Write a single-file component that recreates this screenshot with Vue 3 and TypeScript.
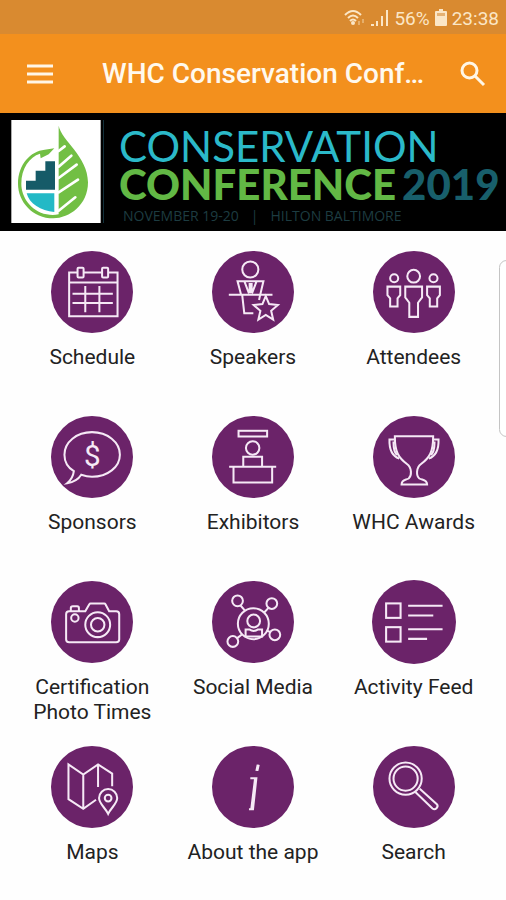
<script setup lang="ts">
type IconName =
  | 'schedule' | 'speakers' | 'attendees'
  | 'sponsors' | 'exhibitors' | 'awards'
  | 'camera' | 'social' | 'feed'
  | 'maps' | 'about' | 'search'

interface Tile {
  icon: IconName
  label: string
}

const tiles: Tile[] = [
  { icon: 'schedule', label: 'Schedule' },
  { icon: 'speakers', label: 'Speakers' },
  { icon: 'attendees', label: 'Attendees' },
  { icon: 'sponsors', label: 'Sponsors' },
  { icon: 'exhibitors', label: 'Exhibitors' },
  { icon: 'awards', label: 'WHC Awards' },
  { icon: 'camera', label: 'Certification Photo Times' },
  { icon: 'social', label: 'Social Media' },
  { icon: 'feed', label: 'Activity Feed' },
  { icon: 'maps', label: 'Maps' },
  { icon: 'about', label: 'About the app' },
  { icon: 'search', label: 'Search' },
]
</script>

<template>
  <div class="app">
    <div class="status">
      <svg class="wifi" viewBox="0 0 22 18" aria-hidden="true">
        <path d="M1 6 Q9 -2 17 6 M4 9 Q9 4 14 9 M6 12 Q9 9 12 12" />
        <circle class="dot" cx="9" cy="14" r="2" />
        <path class="faint" d="M15 12v4M19 10v4" />
      </svg>
      <svg class="signal" viewBox="0 0 18 18" aria-hidden="true">
        <path d="M0 15h3v2H0zM5 12h2v5H5zM10 7h2v10h-2zM15 1h2v16h-2z" />
      </svg>
      <span>56%</span>
      <svg class="battery" viewBox="0 0 12 18" aria-hidden="true">
        <path d="M4 0h4v2h3q1 0 1 1v13q0 1-1 1H1q-1 0-1-1V3q0-1 1-1h3z" />
        <path class="level" d="M2 4h8v3H2z" />
      </svg>
      <span>23:38</span>
    </div>

    <header class="bar">
      <button class="bar-button" type="button" aria-label="Menu">
        <svg class="menu-icon" viewBox="0 0 28 20" aria-hidden="true">
          <path d="M1 2h26M1 10h26M1 18h26" />
        </svg>
      </button>
      <h1 class="title">WHC Conservation Conf…</h1>
      <button class="bar-button" type="button" aria-label="Search">
        <svg class="find-icon" viewBox="0 0 26 26" aria-hidden="true">
          <circle cx="9.500" cy="9.500" r="7.500" />
          <path d="M15 15l9 9" />
        </svg>
      </button>
    </header>

    <section class="banner">
      <svg class="logo" viewBox="34 31 268 309" aria-hidden="true">
        <rect x="34" y="31" width="268" height="309" fill="#fff" />
        <path fill="#72bf44" d="M176 48C184 92 264 140 264 218C264 286 208 326 160 326C98 326 54 276 54 222C54 164 92 124 134 120L163 116L146 134L122 146L120 132C88 142 64 176 64 222C64 262 92 304 140 314Q158 318 176 314Z" />
        <path fill="none" stroke="#fff" stroke-width="8" stroke-linecap="round" d="M176 124L194 110M176 171L214 138M176 205L230 165M176 248L234 210M176 303L226 263" />
        <path fill="#165b68" d="M78 240V213H107V183H136V155H165V240Z" />
        <path fill="#23b9c6" d="M80 251H163V307C122 304 88 282 80 251Z" />
      </svg>
      <div class="wordmark">
        <p class="line-one">CONSERVATION</p>
        <p class="line-two"><span>CONFERENCE</span><span class="year">2019</span></p>
        <p class="venue"><span>NOVEMBER 19-20</span><span>|</span><span>HILTON BALTIMORE</span></p>
      </div>
    </section>

    <main class="grid">
      <a v-for="tile in tiles" :key="tile.icon" class="tile" href="#">
        <span class="disc">
          <svg class="icon" :class="{ large: tile.icon === 'feed' }" viewBox="0 0 244 244" aria-hidden="true">
            <circle class="fill" cx="122" cy="122" r="122" />
            <g v-if="tile.icon === 'schedule'">
              <path d="M79 64H54V194H198V64H171M97 64H151M54 94H198M102 104V182M144 104V182M64 127H184M64 155H184" />
              <rect x="79" y="50" width="18" height="29" rx="3" />
              <rect x="152" y="50" width="18" height="29" rx="3" />
            </g>
            <g v-else-if="tile.icon === 'speakers'">
              <circle cx="114" cy="55" r="24" />
              <path d="M86 128L76 90H153L144 128M97 92L110 126M132 92L119 126M112 95V126M118 95V126M50 130H180M90 132L96 185H123M143 132L140 146" />
              <path d="M160 134L170 158L196 161L176 178L182 204L160 190L138 204L144 178L124 161L150 158Z" />
            </g>
            <g v-else-if="tile.icon === 'attendees'">
              <circle cx="121" cy="75" r="19" />
              <circle cx="63" cy="81" r="12" />
              <circle cx="180" cy="81" r="12" />
              <path d="M96 106h50v32l-12 16v42h-26v-42l-12-16zM43 106h38v25l-8 10v24h-22v-24l-8-10zM161 106h38v25l-8 10v24h-22v-24l-8-10z" />
            </g>
            <g v-else-if="tile.icon === 'sponsors'">
              <path d="M68 164C50 153 40 134 40 115C40 78 76 48 122 48C168 48 205 78 205 115C205 152 168 181 122 181C110 181 101 179 90 175C82 188 68 197 48 200C58 192 66 180 68 164Z" />
              <text x="123" y="149" text-anchor="middle">$</text>
            </g>
            <g v-else-if="tile.icon === 'exhibitors'">
              <rect x="79" y="44" width="85" height="17" />
              <circle cx="121" cy="95" r="20" />
              <path d="M93 150V121H149V150M51 151H191M64 151V198H179V151" />
            </g>
            <g v-else-if="tile.icon === 'awards'">
              <path d="M65 60H179C179 108 168 124 143 143C128 154 128 178 138 186C146 191 161 188 161 204H85C85 188 98 191 106 186C116 178 116 154 101 143C76 124 65 108 65 60Z" />
              <path d="M64 70H49C48 98 54 118 78 127M66 79H61C61 98 65 110 71 116M180 70H195C196 98 190 118 166 127M178 79H183C183 98 179 110 173 116" />
            </g>
            <g v-else-if="tile.icon === 'camera'">
              <path d="M54 90H102L114 69Q115 67 118 67H158Q161 67 162 69L173 90H194Q203 90 203 99V174Q203 182 194 182H54Q45 182 45 174V99Q45 90 54 90ZM59 89V80Q59 75 65 75H78Q83 75 83 80V89" />
              <circle cx="139" cy="130" r="37" />
              <circle cx="139" cy="130" r="20" />
              <circle cx="71" cy="110" r="11" />
            </g>
            <g v-else-if="tile.icon === 'social'">
              <circle cx="123" cy="127" r="46" />
              <circle cx="124" cy="119" r="19" />
              <path d="M100 165V144H111Q124 153 137 144H149V165ZM85 73L98 88M168 80L156 93M75 170L89 159M174 152L164 148" />
              <circle cx="76" cy="59" r="16" />
              <circle cx="178" cy="67" r="16" />
              <circle cx="62" cy="180" r="16" />
              <circle cx="187" cy="160" r="16" />
            </g>
            <g v-else-if="tile.icon === 'feed'">
              <rect x="41" y="68" width="42" height="42" />
              <rect x="41" y="137" width="42" height="42" />
              <path d="M105 75H205M105 103H178M105 143H205M105 171H160" />
            </g>
            <g v-else-if="tile.icon === 'maps'">
              <path d="M134 160L96 187L52 158V55L96 85L140 55L182 82V120M96 85V187M140 55V122" />
              <path d="M170 202C162 184 143 172 143 155A27 27 0 0 1 197 155C197 172 178 184 170 202Z" />
              <circle cx="170" cy="155" r="10" />
            </g>
            <g v-else-if="tile.icon === 'about'">
              <path d="M136 56L132 74M139 56L135 74" />
              <path d="M114 96H132L122 188H110M128 98L117 186" />
            </g>
            <g v-else>
              <circle cx="97" cy="97" r="48" />
              <circle cx="97" cy="97" r="36" />
              <path d="M126 137L177 186Q183 191 189 185Q195 179 190 173L139 127" />
            </g>
          </svg>
        </span>
        <span class="label">{{ tile.label }}</span>
      </a>
    </main>

    <div class="edge-handle" aria-hidden="true"></div>
  </div>
</template>

<style>
body {
  margin: 0;
  background: #fefefe;
}
</style>

<style scoped>
.app {
  position: relative;
  min-height: 100vh;
  overflow: hidden;
  font-family: Roboto, "Liberation Sans", sans-serif;
  color: #222;
}

.status {
  display: flex;
  align-items: center;
  justify-content: flex-end;
  gap: 5px;
  height: 34px;
  padding: 2px 7px 0 0;
  box-sizing: border-box;
  background: #d98a30;
  color: #fbe6c6;
  font-size: 19px;
}

.status svg {
  height: 18px;
  fill: #fbe6c6;
}

.status .wifi {
  width: 22px;
  fill: none;
  stroke: #fbe6c6;
  stroke-width: 2;
}

.status .wifi .dot {
  fill: #fbe6c6;
  stroke: none;
}

.status .wifi .faint {
  opacity: 0.4;
}

.status .signal {
  width: 18px;
}

.status .battery {
  width: 12px;
}

.status .battery .level {
  fill: #e5b173;
}

.bar {
  display: flex;
  align-items: center;
  height: 79px;
  padding: 0 14px 0 20px;
  background: #f3901d;
}

.bar-button {
  display: flex;
  flex: none;
  padding: 6px;
  border: 0;
  background: none;
}

.bar-button svg {
  fill: none;
  stroke: #fff6e6;
  stroke-width: 3;
}

.menu-icon {
  width: 28px;
  height: 20px;
}

.find-icon {
  width: 26px;
  height: 26px;
}

.title {
  flex: 1;
  margin: 0 0 0 42px;
  overflow: hidden;
  color: #fff9ee;
  font-size: 28px;
  font-weight: 500;
  line-height: 36px;
  white-space: nowrap;
}

.banner {
  display: flex;
  height: 118px;
  padding: 7px 0 8px 11px;
  box-sizing: border-box;
  overflow: hidden;
  background: #000;
}

.logo {
  flex: none;
  width: 90px;
  height: 103px;
}

.wordmark {
  margin-left: 2px;
  padding-left: 15px;
  border-left: 1px solid #12303a;
  white-space: nowrap;
}

.wordmark p {
  margin: 0;
}

.wordmark .line-one {
  padding-top: 7px;
  color: #2bb9c9;
  font: 400 42px/38px Lato, sans-serif;
}

.wordmark .line-two {
  display: flex;
  gap: 6px;
  color: #62b845;
  font: 900 42px/38px Lato, sans-serif;
}

.wordmark .year {
  color: #185f6b;
}

.wordmark .venue {
  display: flex;
  gap: 12px;
  padding-left: 4px;
  color: #1d3c41;
  font: 400 14px/26px "Open Sans", sans-serif;
}

.grid {
  display: grid;
  grid-template-columns: repeat(3, 1fr);
  grid-auto-rows: 165px;
  padding: 20px 12px 0;
}

.tile {
  display: flex;
  flex-direction: column;
  align-items: center;
  color: inherit;
  text-decoration: none;
}

.disc {
  display: flex;
  align-items: center;
  justify-content: center;
  width: 82px;
  height: 82px;
}

.icon {
  flex: none;
  width: 82px;
  height: 82px;
  fill: none;
  stroke: #f6e9f6;
  stroke-width: 6;
}

.icon.large {
  width: 84px;
  height: 84px;
}

.icon .fill {
  fill: #6b2369;
  stroke: none;
}

.icon text {
  fill: #f6e9f6;
  stroke: none;
  font: 400 88px Roboto, sans-serif;
}

.label {
  max-width: 140px;
  margin-top: 12px;
  font-size: 21px;
  line-height: 25px;
  text-align: center;
}

.edge-handle {
  position: absolute;
  top: 260px;
  right: -8px;
  width: 13px;
  height: 175px;
  border: 1px solid #c4c4c4;
  border-radius: 8px;
  background: #fff;
}
</style>
